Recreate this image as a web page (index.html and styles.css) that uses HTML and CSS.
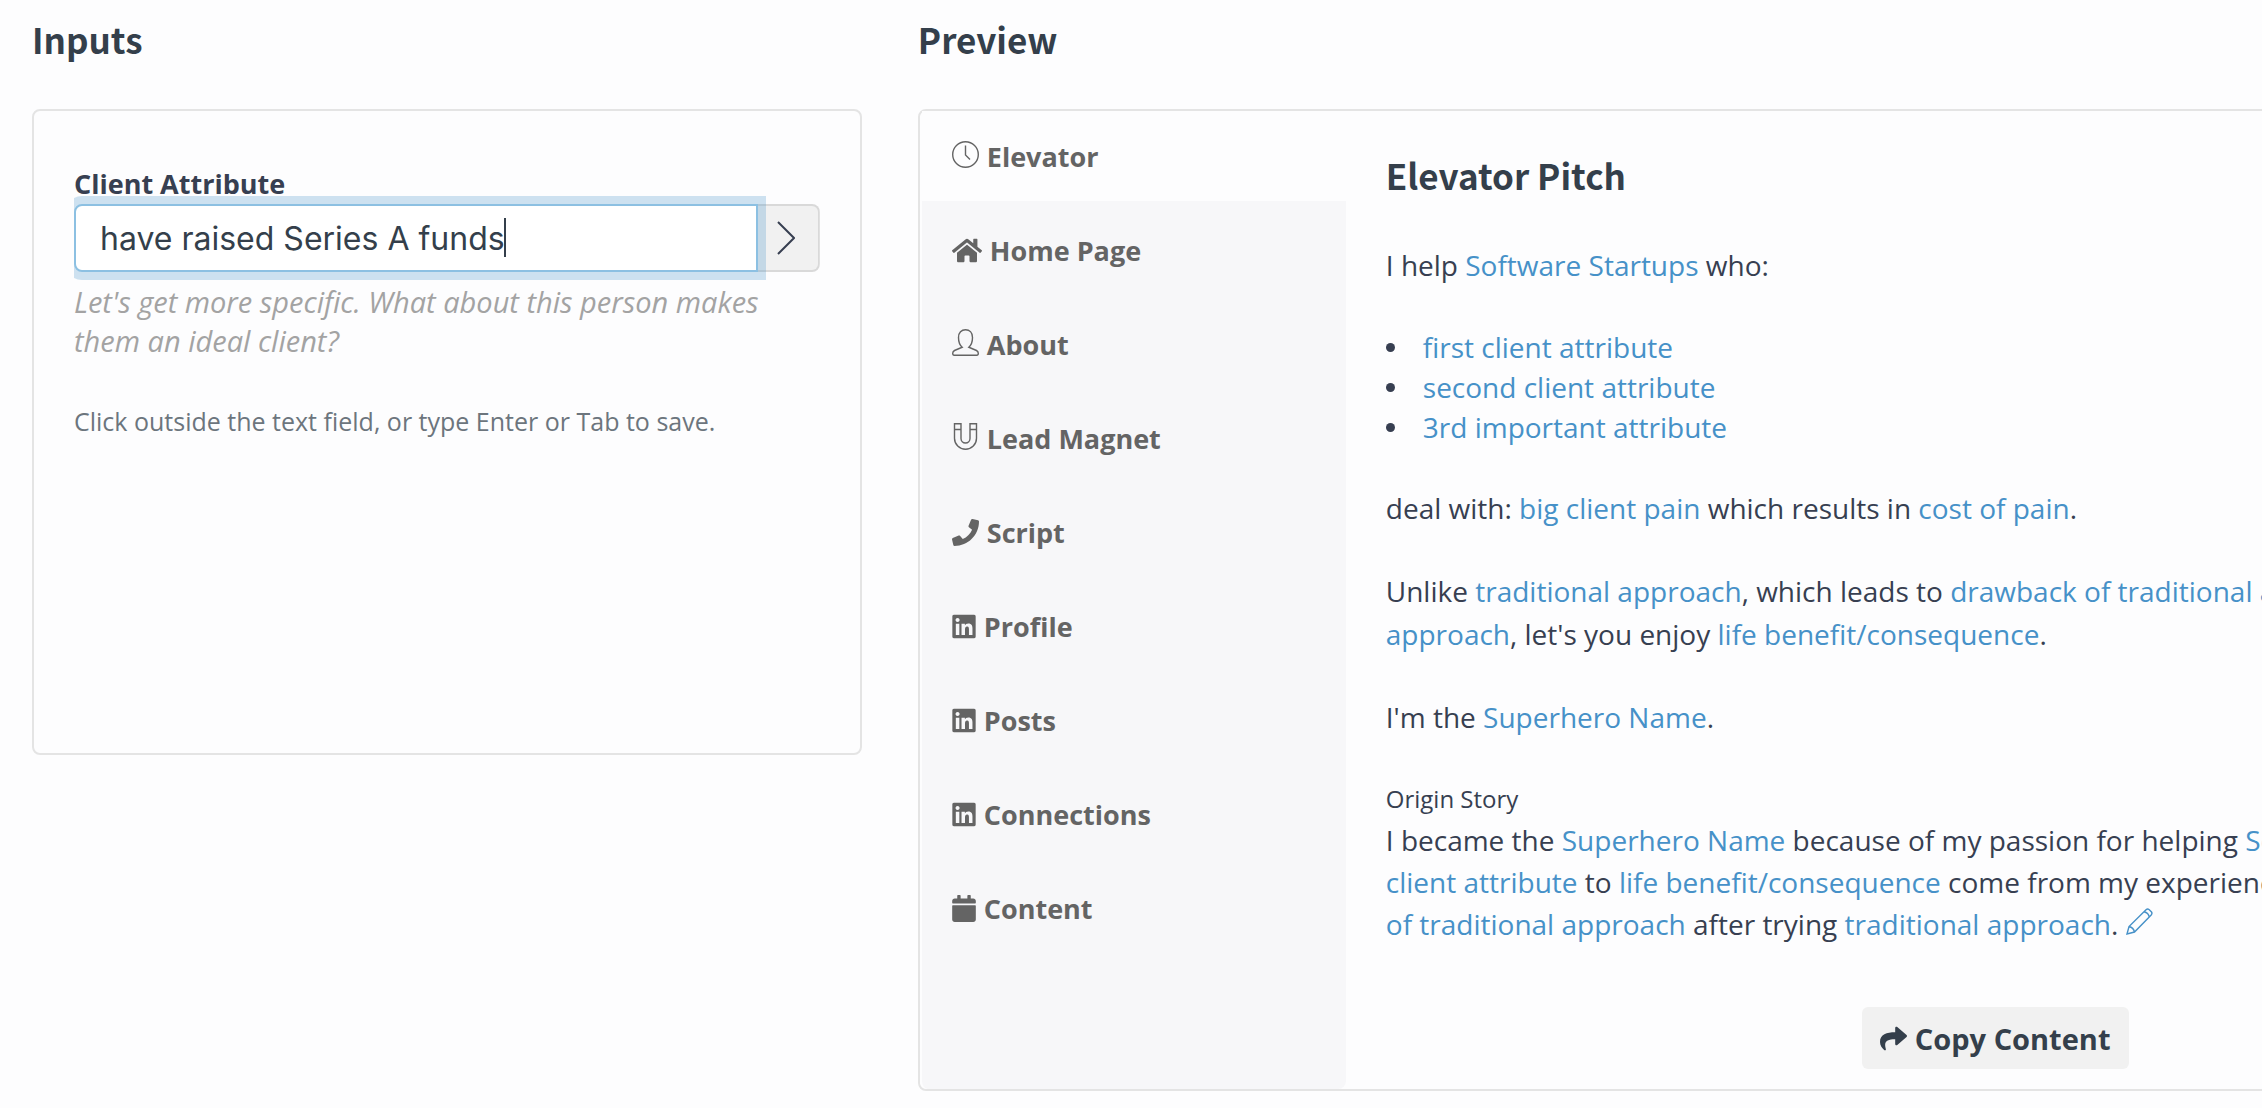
FILE: index.html
```html
<!DOCTYPE html>
<html lang="en">
  <head>
    <meta charset="UTF-8" />
    <meta name="viewport" content="width=device-width, initial-scale=1.0" />
    <title>Elevator Pitch</title>
    <link rel="stylesheet" href="styles.css">
  </head>
  <body>
    <div class="page">
      <section class="inputs">
        <h2>Inputs</h2>
        <form class="card form">
          <label for="attribute">Client Attribute</label>
          <div class="input-group">
            <input type="text" id="attribute" value="have raised Series A funds" />
            <span class="caret"></span>
            <button type="button" aria-label="Next">
              <svg width="18" height="34" viewBox="0 0 18 34"><path d="M1 1l16 16L1 33" fill="none" stroke="currentColor" stroke-width="2" /></svg>
            </button>
          </div>
          <p class="hint">Let's get more specific. What about this person makes them an ideal client?</p>
          <p class="note">Click outside the text field, or type Enter or Tab to save.</p>
        </form>
      </section>

      <section class="preview">
        <h2>Preview</h2>
        <div class="card panel">
          <nav>
            <a href="#" class="active">
              <svg class="line" width="27" height="27" viewBox="0 0 27 27"><circle cx="13.5" cy="13.5" r="12.8" /><path d="M13.5 4.500v9.500l4.500 4.500" /></svg>
              Elevator
            </a>
            <a href="#">
              <svg width="30" height="27" viewBox="0 0 576 512"><path d="M280.37 148.26L96 300.11V464a16 16 0 0 0 16 16l112.06-.29a16 16 0 0 0 15.92-16V368a16 16 0 0 1 16-16h64a16 16 0 0 1 16 16v95.64a16 16 0 0 0 16 16.05L464 480a16 16 0 0 0 16-16V300L295.67 148.26a12.19 12.19 0 0 0-15.3 0zM571.6 251.47L488 182.56V44.05a12 12 0 0 0-12-12h-56a12 12 0 0 0-12 12v72.61L318.47 43a48 48 0 0 0-61 0L4.34 251.47a12 12 0 0 0-1.6 16.9l25.5 31A12 12 0 0 0 45.15 301l235.22-193.74a12.19 12.19 0 0 1 15.3 0L530.9 301a12 12 0 0 0 16.9-1.6l25.5-31a12 12 0 0 0-1.7-16.93z" /></svg>
              Home Page
            </a>
            <a href="#">
              <svg class="line" width="27" height="27" viewBox="0 0 27 27"><path d="M10.200 18.200C7.500 16 6.500 12.500 6.500 8.500C6.500 3.500 9.500 .8 13.500 .8S20.500 3.500 20.500 8.500C20.500 12.500 19.500 16 16.800 18.200L24.500 21.500Q26.300 22.400 26.300 24.300Q26.300 26.300 24.800 26.300H2.200Q.7 26.300 .7 24.300Q.7 22.400 2.500 21.500Z" /></svg>
              About
            </a>
            <a href="#">
              <svg class="line" width="27" height="27" viewBox="0 0 27 27"><path d="M2.500 .7H9V15.500A4.500 4.500 0 0 0 18 15.500V.7H24.500V15.300A11 11 0 0 1 2.500 15.300ZM2.500 6.500H9M18 6.500H24.500" /></svg>
              Lead Magnet
            </a>
            <a href="#">
              <svg width="27" height="27" viewBox="0 0 512 512"><path d="M493.4 24.6l-104-24c-11.3-2.6-22.9 3.3-27.5 13.900l-48 112c-4.200 9.800-1.400 21.300 6.900 28l60.600 49.600c-36 76.700-98.900 140.500-177.200 177.200l-49.600-60.600c-6.800-8.300-18.200-11.100-28-6.900l-112 48C3.900 366.500-2 378.100.6 389.400l24 104C27.100 504.200 36.700 512 48 512c256.100 0 464-207.500 464-464 0-11.200-7.700-20.900-18.600-23.400z" /></svg>
              Script
            </a>
            <a href="#">
              <svg width="24" height="27" viewBox="0 0 448 512"><use href="#linkedin" /></svg>
              Profile
            </a>
            <a href="#">
              <svg width="24" height="27" viewBox="0 0 448 512"><use href="#linkedin" /></svg>
              Posts
            </a>
            <a href="#">
              <svg width="24" height="27" viewBox="0 0 448 512"><use href="#linkedin" /></svg>
              Connections
            </a>
            <a href="#">
              <svg width="24" height="27" viewBox="0 0 448 512"><path d="M12 192h424c6.600 0 12 5.400 12 12v260c0 26.500-21.500 48-48 48H48c-26.500 0-48-21.500-48-48V204c0-6.600 5.400-12 12-12zm436-44v-36c0-26.500-21.500-48-48-48h-48V12c0-6.600-5.400-12-12-12h-40c-6.600 0-12 5.400-12 12v52H160V12c0-6.600-5.400-12-12-12h-40c-6.600 0-12 5.400-12 12v52H48C21.500 64 0 85.500 0 112v36c0 6.600 5.400 12 12 12h424c6.600 0 12-5.400 12-12z" /></svg>
              Content
            </a>
          </nav>

          <div class="content">
            <h3>Elevator Pitch</h3>
            <p>I help <a href="#">Software Startups</a> who:</p>
            <ul>
              <li><a href="#">first client attribute</a></li>
              <li><a href="#">second client attribute</a></li>
              <li><a href="#">3rd important attribute</a></li>
            </ul>
            <p>deal with: <a href="#">big client pain</a> which results in <a href="#">cost of pain</a>.</p>
            <p>
              Unlike <a href="#">traditional approach</a>, which leads to <a href="#">drawback of traditional approach</a>,<br />
              <a href="#">approach</a>, let's you enjoy <a href="#">life benefit/consequence</a>.
            </p>
            <p>I'm the <a href="#">Superhero Name</a>.</p>
            <h4>Origin Story</h4>
            <p class="story">
              I became the <a href="#">Superhero Name</a> because of my passion for helping <a href="#">Software Startups</a><br />
              <a href="#">client attribute</a> to <a href="#">life benefit/consequence</a> come from my experience<br />
              <a href="#">of traditional approach</a> after trying <a href="#">traditional approach</a>.
              <a href="#" aria-label="Edit"><svg class="line" width="27" height="27" viewBox="0 0 27 27"><path d="M1 26L3 18.500L20 1.800Q21.500 .5 23 1.500L25.500 4Q26.500 5.500 25.200 7L8.500 24ZM3 18.500Q7.500 19.500 8.500 24M18 3.800Q22.500 4.800 23.200 9" /></svg></a>
            </p>
            <button type="button" class="copy">
              <svg width="27" height="27" viewBox="0 0 512 512"><path d="M503.691 189.836L327.687 37.851C312.281 24.546 288 35.347 288 56.015v80.053C127.371 137.907 0 170.100 0 322.326c0 61.441 39.581 122.309 83.333 154.132 13.653 9.931 33.111-2.533 28.077-18.631C66.066 312.814 132.917 274.316 288 272.085V360c0 20.700 24.300 31.453 39.687 18.164l176.004-152c11.071-9.562 11.086-26.753 0-36.328z" /></svg>
              Copy Content
            </button>
          </div>
        </div>
      </section>
    </div>

    <!-- shared icon -->
    <svg class="defs" width="0" height="0">
      <symbol id="linkedin" viewBox="0 0 448 512"><path d="M416 32H31.900C14.300 32 0 46.500 0 64.300v383.400C0 465.500 14.300 480 31.900 480H416c17.600 0 32-14.500 32-32.300V64.300c0-17.800-14.400-32.300-32-32.300zM135.400 416H69V202.200h66.500V416zm-33.200-243c-21.300 0-38.500-17.300-38.500-38.500S80.900 96 102.200 96c21.200 0 38.500 17.300 38.500 38.500 0 21.300-17.200 38.500-38.500 38.500zm282.100 243h-66.400V312c0-24.800-.5-56.700-34.500-56.700-34.600 0-39.900 27-39.900 54.900V416h-66.400V202.200h63.700v29.200h.9c8.900-16.800 30.600-34.500 62.900-34.500 67.200 0 79.700 44.300 79.700 101.900V416z" /></symbol>
    </svg>
  </body>
</html>
```
FILE: styles.css
```css
* {
  box-sizing: border-box;
  margin: 0;
  padding: 0;
}
body {
  background: #fdfdfe;
  color: #373f51;
  font-family: "Open Sans", "Noto Sans", sans-serif;
  font-size: 28px;
  line-height: 43px;
  overflow: hidden;
}
a {
  color: #4691c8;
  text-decoration: none;
}
svg {
  fill: currentColor;
}
svg.line {
  fill: none;
  stroke: currentColor;
  stroke-width: 1.4;
}
.defs {
  display: block;
}
/* the preview runs past the right edge of the window */
.page {
  display: grid;
  grid-template-columns: 12fr 25fr;
  gap: 56px;
  width: 117%;
  padding: 15px 0 16px 32px;
}
h2,
h3 {
  color: #343f4b;
  font-family: "Noto Sans CJK JP", sans-serif;
  font-size: 35px;
  line-height: 48px;
}
h2 {
  margin-bottom: 46px;
}
.card {
  border: 2px solid #e4e4e4;
  border-radius: 8px;
}

/* inputs */
.form {
  min-height: 646px;
  padding: 52px 40px 40px;
}
.form label {
  display: block;
  font-size: 27px;
  font-weight: bold;
  line-height: 41px;
}
.input-group {
  position: relative;
  display: flex;
  clip-path: inset(-8px 0);
}
.input-group input {
  position: relative;
  flex: 1;
  min-width: 0;
  height: 68px;
  padding: 0 24px;
  border: 2px solid #8cc0e2;
  border-radius: 8px 0 0 8px;
  background: #fff;
  color: #343f4b;
  font-family: Inter, sans-serif;
  font-size: 32px;
  outline: none;
  box-shadow: 0 0 0 8px rgba(70, 145, 200, 0.26);
}
.caret {
  position: absolute;
  top: 14px;
  left: 430px;
  width: 2px;
  height: 39px;
  background: #343f4b;
}
.input-group button {
  width: 62px;
  border: 2px solid #d9d9d9;
  border-left: 0;
  border-radius: 0 8px 8px 0;
  background: #f1f1f1;
  color: #373f51;
}
.input-group svg {
  display: block;
  margin: 0 auto 0 19px;
}
.hint {
  margin-top: 10px;
  padding-right: 48px;
  color: #a3a3a3;
  font-size: 29px;
  font-style: italic;
  line-height: 39px;
}
.note {
  margin-top: 41px;
  color: #6c757d;
  font-size: 25px;
  line-height: 40px;
}

/* preview */
.panel {
  display: flex;
}
nav {
  flex: 0 0 426px;
  border-left: 2px solid #fdfdfe;
  border-radius: 8px;
  background: #f7f7f9;
}
nav a {
  display: flex;
  align-items: center;
  gap: 8px;
  height: 94px;
  padding: 4px 0 0 30px;
  color: #646464;
  font-size: 27px;
  font-weight: bold;
}
nav a.active {
  height: 90px;
  padding-top: 0;
  background: #fdfdfe;
}
nav .line {
  margin-bottom: 4px;
}
.content {
  flex: 1;
  padding: 40px 40px 20px;
  white-space: nowrap;
}
.content p,
.content ul {
  margin-bottom: 40px;
}
.content h3 {
  margin-bottom: 45px;
}
.content li {
  display: flex;
  align-items: center;
  line-height: 40px;
}
.content li::before {
  content: "";
  width: 9px;
  height: 9px;
  margin-right: 28px;
  border-radius: 50%;
  background: #373f51;
}
.content h4 {
  font-size: 24px;
  font-weight: normal;
  line-height: 40px;
}
.content .story {
  margin-bottom: 62px;
  line-height: 42px;
}
.copy {
  display: flex;
  align-items: center;
  gap: 8px;
  height: 62px;
  margin: 0 auto;
  padding: 0 18px;
  border: 0;
  border-radius: 6px;
  background: #f1f1f1;
  color: #343f4b;
  font: inherit;
  font-size: 29px;
  font-weight: bold;
}
```
